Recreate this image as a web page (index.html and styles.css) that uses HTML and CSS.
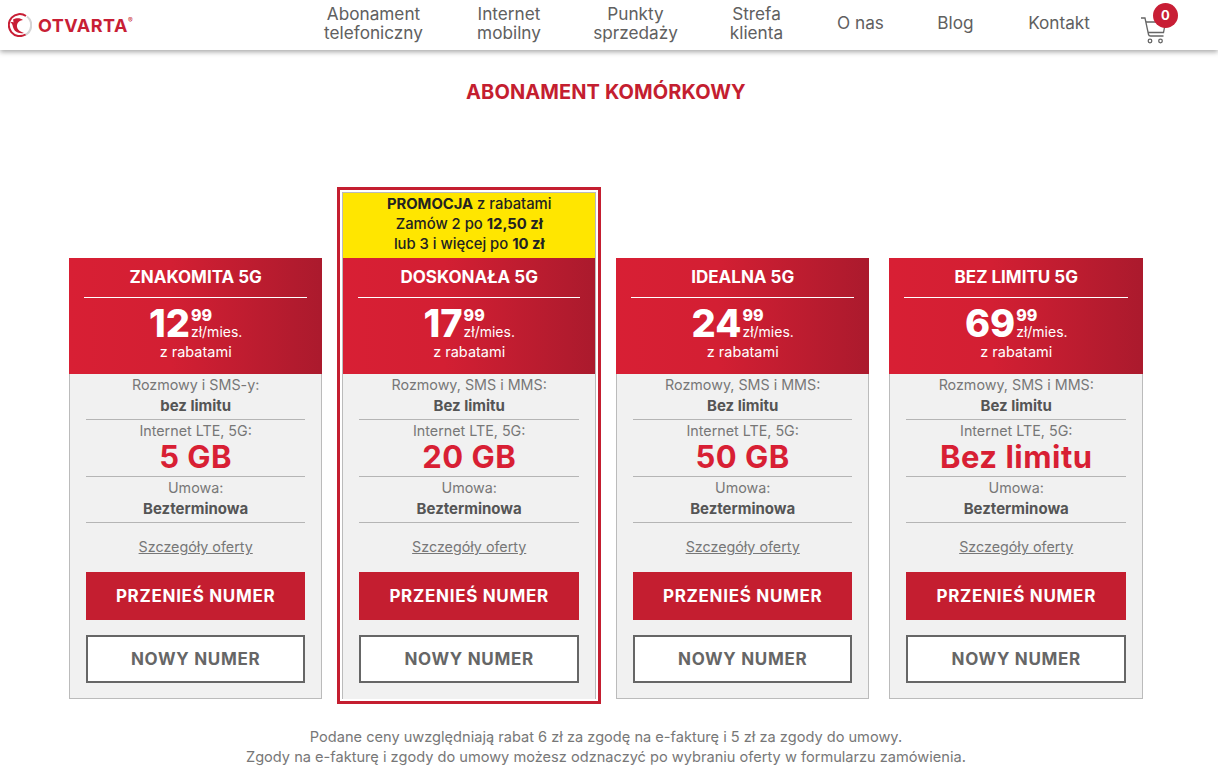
FILE: index.html
```html
<!DOCTYPE html>
<html lang="pl">
<head>
    <meta charset="UTF-8">
    <meta name="viewport" content="width=device-width, initial-scale=1.0">
    <title>Abonament komórkowy</title>
    <link rel="stylesheet" href="styles.css">
</head>
<body>
    <header class="topbar">
        <a class="logo" href="#">
            <svg class="logo-mark" width="24" height="24" viewBox="0 0 24 24">
                <path d="M19 3.500A11 11 0 0 1 17 22" fill="none" stroke="#d4d4d4" stroke-width="2.200"/>
                <path d="M18 3A11 11 0 1 0 17.500 21.500" fill="none" stroke="#c81e35" stroke-width="2"/>
                <path d="M5 6.500c3-1.500 7-2 10 .5-3 .5-5.500 2-6 5-.5 3.500 2 6.500 7 8-5.500 1-10-1.500-11-6-.4-2-1-3.500-2.500-5 1.500 0 2.500 0 3 .5 0-1-.2-2-.5-3z" fill="#c81e35"/>
            </svg>
            <span class="logo-text">OTVARTA</span><sup class="logo-reg">®</sup>
        </a>
        <nav class="menu">
            <a href="#">Abonament<br>telefoniczny</a>
            <a href="#">Internet<br>mobilny</a>
            <a href="#">Punkty<br>sprzedaży</a>
            <a href="#">Strefa<br>klienta</a>
            <a href="#">O nas</a>
            <a href="#">Blog</a>
            <a href="#">Kontakt</a>
        </nav>
        <a class="cart" href="#">
            <svg width="26" height="27" viewBox="0 0 26 27">
                <path d="M0 1h4l3.500 16.500q.3 1.500 2 1.500h13" fill="none" stroke="#666" stroke-width="1.300"/>
                <path d="M5 5h19.500l-2 10.500H7" fill="none" stroke="#666" stroke-width="1.300"/>
                <circle cx="9" cy="24" r="1.800" fill="none" stroke="#666" stroke-width="1.300"/>
                <circle cx="19.500" cy="24" r="1.800" fill="none" stroke="#666" stroke-width="1.300"/>
            </svg>
            <span class="cart-badge">0</span>
        </a>
    </header>

    <main class="page">
        <h1>ABONAMENT KOMÓRKOWY</h1>

        <section class="plans">
            <article class="plan">
                <div class="plan-head">
                    <h2>ZNAKOMITA 5G</h2>
                    <div class="price"><strong>12</strong><span class="price-side"><b>99</b><span>zł/mies.</span></span></div>
                    <p>z rabatami</p>
                </div>
                <div class="plan-body">
                    <div class="row row-top">Rozmowy i SMS-y:<b>bez limitu</b></div>
                    <div class="row row-data">Internet LTE, 5G:<b class="big">5 GB</b></div>
                    <div class="row row-deal">Umowa:<b>Bezterminowa</b></div>
                    <a class="details" href="#">Szczegóły oferty</a>
                    <a class="btn btn-red" href="#">PRZENIEŚ NUMER</a>
                    <a class="btn btn-line" href="#">NOWY NUMER</a>
                </div>
            </article>

            <article class="plan plan-promo">
                <div class="promo"><b>PROMOCJA</b> z rabatami<br>Zamów 2 po <b>12,50 zł</b><br>lub 3 i więcej po <b>10 zł</b></div>
                <div class="plan-head">
                    <h2>DOSKONAŁA 5G</h2>
                    <div class="price"><strong>17</strong><span class="price-side"><b>99</b><span>zł/mies.</span></span></div>
                    <p>z rabatami</p>
                </div>
                <div class="plan-body">
                    <div class="row row-top">Rozmowy, SMS i MMS:<b>Bez limitu</b></div>
                    <div class="row row-data">Internet LTE, 5G:<b class="big">20 GB</b></div>
                    <div class="row row-deal">Umowa:<b>Bezterminowa</b></div>
                    <a class="details" href="#">Szczegóły oferty</a>
                    <a class="btn btn-red" href="#">PRZENIEŚ NUMER</a>
                    <a class="btn btn-line" href="#">NOWY NUMER</a>
                </div>
            </article>

            <article class="plan">
                <div class="plan-head">
                    <h2>IDEALNA 5G</h2>
                    <div class="price"><strong>24</strong><span class="price-side"><b>99</b><span>zł/mies.</span></span></div>
                    <p>z rabatami</p>
                </div>
                <div class="plan-body">
                    <div class="row row-top">Rozmowy, SMS i MMS:<b>Bez limitu</b></div>
                    <div class="row row-data">Internet LTE, 5G:<b class="big">50 GB</b></div>
                    <div class="row row-deal">Umowa:<b>Bezterminowa</b></div>
                    <a class="details" href="#">Szczegóły oferty</a>
                    <a class="btn btn-red" href="#">PRZENIEŚ NUMER</a>
                    <a class="btn btn-line" href="#">NOWY NUMER</a>
                </div>
            </article>

            <article class="plan">
                <div class="plan-head">
                    <h2>BEZ LIMITU 5G</h2>
                    <div class="price"><strong>69</strong><span class="price-side"><b>99</b><span>zł/mies.</span></span></div>
                    <p>z rabatami</p>
                </div>
                <div class="plan-body">
                    <div class="row row-top">Rozmowy, SMS i MMS:<b>Bez limitu</b></div>
                    <div class="row row-data">Internet LTE, 5G:<b class="big">Bez limitu</b></div>
                    <div class="row row-deal">Umowa:<b>Bezterminowa</b></div>
                    <a class="details" href="#">Szczegóły oferty</a>
                    <a class="btn btn-red" href="#">PRZENIEŚ NUMER</a>
                    <a class="btn btn-line" href="#">NOWY NUMER</a>
                </div>
            </article>
        </section>

        <p class="note">Podane ceny uwzględniają rabat 6 zł za zgodę na e-fakturę i 5 zł za zgody do umowy.<br>Zgody na e-fakturę i zgody do umowy możesz odznaczyć po wybraniu oferty w formularzu zamówienia.</p>
    </main>
</body>
</html>
```

FILE: styles.css
```css
* {
    box-sizing: border-box;
}

html, body {
    height: 780px;
    overflow: hidden;
}

body {
    margin: 0;
    font-family: "Inter", "Liberation Sans", sans-serif;
    color: #666;
    background: #fff;
}

a {
    color: inherit;
    text-decoration: none;
}

.topbar {
    display: flex;
    align-items: center;
    height: 50px;
    padding-left: 8px;
    background: #fff;
    box-shadow: 0 2px 5px rgba(0, 0, 0, 0.35);
}

.logo {
    display: flex;
    align-items: center;
    width: 316px;
    color: #c81e35;
}

.logo-mark {
    margin-right: 6px;
}

.logo-text {
    font-size: 18px;
    font-weight: 700;
    letter-spacing: 0.5px;
}

.logo-reg {
    font-size: 7px;
    margin-bottom: 10px;
}

.menu {
    display: grid;
    grid-template-columns: 99px 66px 81px 55px 47px 37px 64px;
    gap: 53px;
    align-items: center;
    justify-items: center;
    width: 767px;
    margin-top: -5px;
    font-size: 17.200px;
    line-height: 19px;
    text-align: center;
    white-space: nowrap;
    color: #606060;
}

.cart {
    position: relative;
    margin-left: 50px;
    margin-top: 10px;
    height: 27px;
}

.cart-badge {
    position: absolute;
    top: -14px;
    left: 12px;
    width: 25px;
    height: 25px;
    border-radius: 50%;
    background: #c81e35;
    color: #fff;
    font-size: 13px;
    font-weight: 700;
    line-height: 25px;
    text-align: center;
}

.page {
    padding-left: 68.900px;
    width: 1143px;
}

h1 {
    margin: 30px 0 0;
    color: #c41e30;
    font-size: 20px;
    line-height: 24px;
    font-weight: 700;
    letter-spacing: 0.1px;
    text-align: center;
}

.plans {
    display: flex;
    align-items: flex-end;
    gap: 20px;
    height: 521px;
    margin-top: 74px;
}

.plan {
    flex: 1 1 250px;
}

.plan-promo {
    outline: 3px solid #c41e30;
    outline-offset: 2px;
    border: 1px solid #bbb;
    border-bottom: 0;
}

.promo {
    height: 65px;
    padding-top: 1px;
    background: #ffe600;
    color: #222;
    font-size: 14.800px;
    font-weight: 500;
    line-height: 20px;
    text-align: center;
}

.plan-head {
    height: 116px;
    margin: 0;
    padding: 9px 15px 0;
    background: linear-gradient(90deg, #d81f34 0%, #d31f33 40%, #ab1a2d 100%);
    color: #fff;
    text-align: center;
}

.plan-head h2 {
    margin: 0;
    padding-bottom: 9px;
    border-bottom: 1px solid #fff;
    font-size: 17px;
    line-height: 21px;
    font-weight: 700;
}

.price {
    display: flex;
    justify-content: center;
    align-items: flex-start;
    height: 38px;
    margin-top: 7px;
}

.price strong {
    font-size: 38px;
    line-height: 36px;
    font-weight: 800;
}

.price-side {
    display: flex;
    flex-direction: column;
    align-items: flex-start;
    margin-left: 1px;
    padding-top: 1px;
    font-size: 14px;
    line-height: 16px;
}

.price-side b {
    font-size: 16px;
    line-height: 18px;
    font-weight: 800;
}

.plan-head p {
    margin: 0;
    font-size: 14.500px;
    line-height: 18px;
}

.plan-body {
    height: 325px;
    padding: 0 16px;
    background: #f1f1f1;
    border: 1px solid #bbb;
    border-top: 0;
    font-size: 14.300px;
    text-align: center;
}

.plan-promo .plan-body {
    border: 0;
}

.row {
    border-bottom: 1px solid #b5b5b5;
    line-height: 21px;
    color: #777;
}

.row b {
    display: block;
    color: #555;
    font-size: 15px;
    font-weight: 700;
}

.row-top {
    height: 46px;
}

.row-data {
    height: 57px;
}

.row-deal {
    height: 46px;
}

.row .big {
    color: #d81f34;
    font-size: 31px;
    line-height: 32px;
    font-weight: 700;
    letter-spacing: 0.5px;
}

.details {
    display: block;
    margin: 14px 0 15px;
    line-height: 20px;
    color: #777;
    text-decoration: underline;
}

.btn {
    display: block;
    height: 48px;
    margin-bottom: 15px;
    font-size: 17px;
    font-weight: 700;
    letter-spacing: 0.7px;
    line-height: 48px;
    text-align: center;
}

.btn-red {
    background: #c41e30;
    color: #fff;
}

.btn-line {
    background: #fff;
    border: 2px solid #666;
    line-height: 44px;
    color: #666;
}

.note {
    margin: 28px 0 0;
    font-size: 14.600px;
    line-height: 20px;
    text-align: center;
    color: #777;
}
```
